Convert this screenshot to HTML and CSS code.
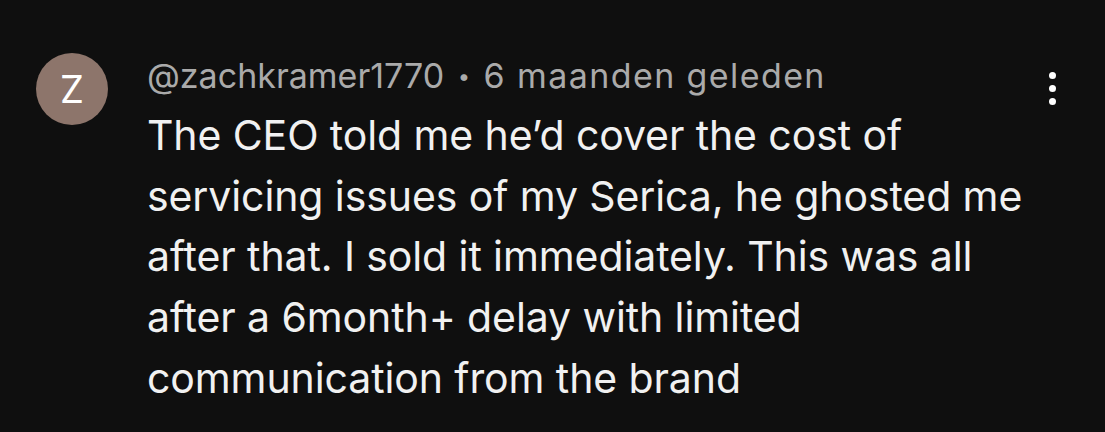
FILE: index.html
```html
<!DOCTYPE html>
<html lang="nl">
<head>
    <meta charset="UTF-8">
    <meta name="viewport" content="width=device-width, initial-scale=1.0">
    <title>Reactie</title>
    <link rel="stylesheet" href="styles.css">
</head>
<body>
    <div class="comment">
        <div class="avatar">Z</div>
        <div class="comment-body">
            <div class="meta">
                <span class="author">@zachkramer1770</span>
                <span class="dot">•</span>
                <span class="time">6 maanden geleden</span>
            </div>
            <p class="text">The CEO told me he’d cover the cost of servicing issues of my Serica, he ghosted me after that. I sold it immediately. This was all after a 6month+ delay with limited communication from the brand</p>
        </div>
        <div class="menu">
            <span></span>
            <span></span>
            <span></span>
        </div>
    </div>
</body>
</html>
```

FILE: styles.css
```css
body {
    margin: 0;
    background: #0f0f0f;
    font-family: Inter, "Noto Sans", sans-serif;
    overflow: hidden;
}
.comment {
    display: flex;
    align-items: flex-start;
    padding: 53px 0 0 36px;
}
.avatar {
    width: 72px;
    height: 72px;
    border-radius: 50%;
    background: #8d756b;
    color: #fff;
    font-size: 38px;
    display: flex;
    align-items: center;
    justify-content: center;
    flex-shrink: 0;
}
.comment-body {
    margin-left: 39px;
    width: 880px;
    margin-top: 3px;
}
.meta {
    color: #aaaaaa;
    font-size: 34px;
    line-height: 40px;
}
.dot {
    font-size: 22px;
    margin: 0 4px;
    vertical-align: 4px;
}
.time {
    letter-spacing: 1.4px;
}
.text {
    margin: 9px 0 0 0;
    color: #f1f1f1;
    font-size: 41px;
    line-height: 60.7px;
    letter-spacing: -0.1px;
}
.menu {
    margin-left: auto;
    margin-right: 49px;
    margin-top: 19px;
    display: flex;
    flex-direction: column;
    gap: 6px;
}
.menu span {
    width: 7px;
    height: 7px;
    border-radius: 50%;
    background: #fff;
}
```
